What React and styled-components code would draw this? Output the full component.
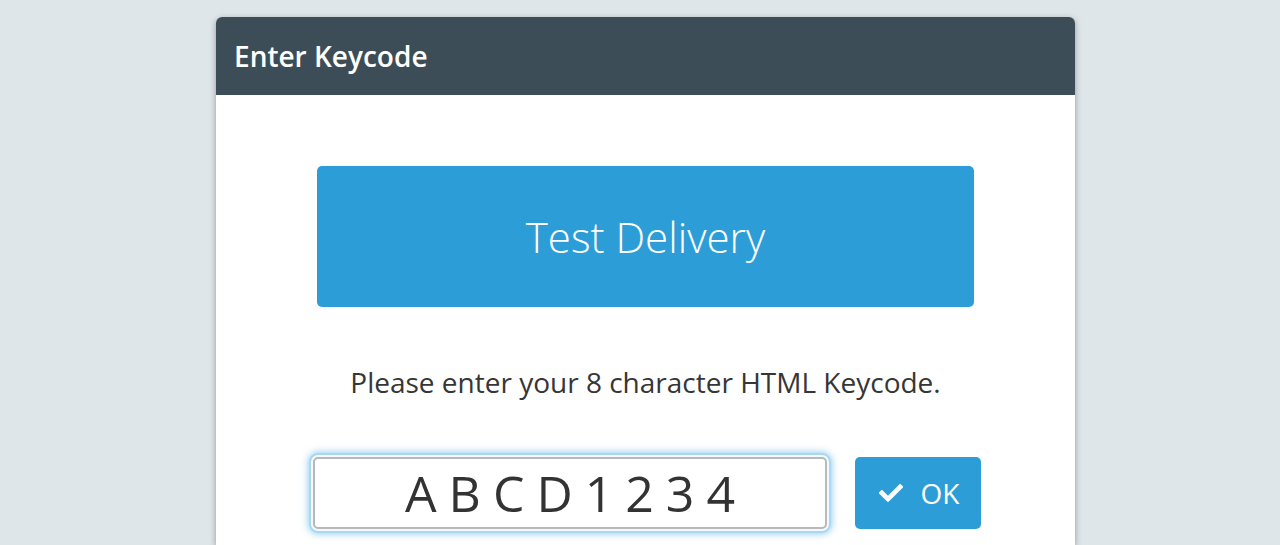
import React from 'react';
import styled, { createGlobalStyle } from 'styled-components';
import { FaCheck } from 'react-icons/fa';

const GlobalStyle = createGlobalStyle`
  html, body {
    margin: 0;
    padding: 0;
    background: #dfe6e9;
    font-family: "Open Sans", "Noto Sans", sans-serif;
    overflow: hidden;
  }
`;

const Page = styled.div`
  height: 545px;
  padding-top: 17px;
  box-sizing: border-box;
`;

const Modal = styled.div`
  width: 859px;
  margin-left: 216px;
  background: #fff;
  border-radius: 6px 6px 0 0;
  box-shadow: 0 2px 6px rgba(0, 0, 0, 0.35);
  overflow: hidden;
`;

const Header = styled.div`
  height: 78px;
  background: #3c4d57;
  display: flex;
  align-items: center;
  padding: 0 18px;
`;

const Title = styled.h1`
  margin: 0;
  color: #fff;
  font-size: 28px;
  font-weight: 600;
`;

const Body = styled.div`
  display: flex;
  flex-direction: column;
  align-items: center;
  padding-top: 71px;
  height: 450px;
  box-sizing: border-box;
`;

const Banner = styled.div`
  width: 657px;
  height: 141px;
  background: #2c9dd7;
  border-radius: 5px;
  display: flex;
  align-items: center;
  justify-content: center;
  color: #fff;
  font-size: 42px;
  font-weight: 300;
`;

const Prompt = styled.p`
  margin: 56px 0 0;
  font-size: 28px;
  color: #363636;
  line-height: 38px;
`;

const Row = styled.div`
  display: flex;
  align-items: center;
  gap: 28px;
  margin: 56px 0 0 3px;
`;

const Input = styled.div`
  width: 514px;
  height: 72px;
  box-sizing: border-box;
  border: 2px solid #b9b9b9;
  border-radius: 5px;
  background: #fff;
  box-shadow: 0 0 0 2px #f2faff, 0 0 0 4px #a9d8f1, 0 0 7px 5px rgba(50, 160, 225, 0.5);
  display: flex;
  align-items: center;
  justify-content: center;
  font-size: 50px;
  color: #333;
  letter-spacing: 12px;
  padding-left: 12px;
`;

const OkButton = styled.button`
  width: 126px;
  height: 72px;
  border: none;
  border-radius: 5px;
  background: #2c9dd7;
  color: #fff;
  font-family: inherit;
  font-size: 28px;
  display: flex;
  align-items: center;
  justify-content: center;
  gap: 18px;
  padding: 0 0 0 2px;
  svg {
    font-size: 24px;
  }
`;

export default function App() {
  return (
    <>
      <GlobalStyle />
      <Page>
        <Modal>
          <Header>
            <Title>Enter Keycode</Title>
          </Header>
          <Body>
            <Banner>Test Delivery</Banner>
            <Prompt>Please enter your 8 character HTML Keycode.</Prompt>
            <Row>
              <Input>ABCD1234</Input>
              <OkButton>
                <FaCheck />
                OK
              </OkButton>
            </Row>
          </Body>
        </Modal>
      </Page>
    </>
  );
}
